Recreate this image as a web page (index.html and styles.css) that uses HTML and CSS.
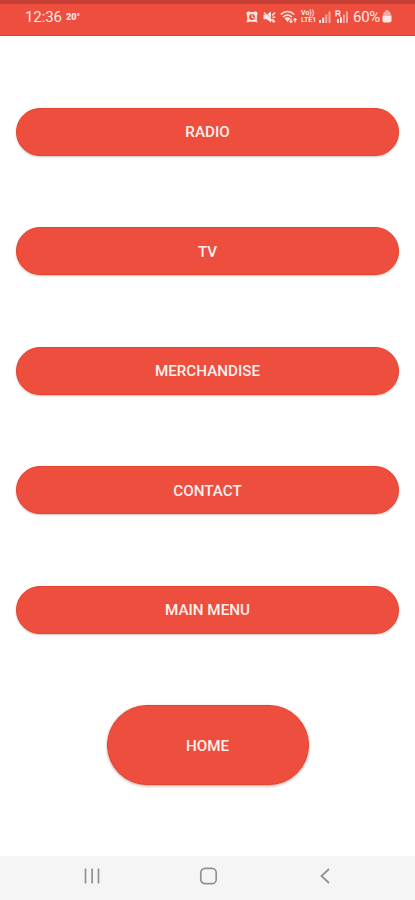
FILE: index.html
```html
<!DOCTYPE html>
<html lang="en">
<head>
<meta charset="utf-8">
<meta name="viewport" content="width=device-width, initial-scale=1">
<title>Menu</title>
<link rel="stylesheet" href="styles.css">
</head>
<body>
<div class="screen">
  <header class="status">
    <span class="clock">12:36</span>
    <span class="temp">20°</span>
    <div class="indicators">
      <svg class="alarm" width="12" height="12" viewBox="0 0 12 12" fill="currentColor"><path fill-rule="evenodd" d="M.6 1.200 3 .3 4 1h4l1-.7 2.400.9v2.500l-.5.700v5l.8 1.800H9.800L9 10.800H3l-.8.400H.3l.8-1.800v-5L.6 3.700ZM6 3.100a2.900 2.900 0 1 0 0 5.800 2.900 2.900 0 0 0 0-5.800Z"/><path d="M5.500 3.800h1.100v1.900l1.300.9-.6.800-1.800-1.100Z"/></svg>
      <svg class="mute" width="13" height="12" viewBox="0 0 13 12"><path fill="currentColor" d="M.5 3.800h3.300l4.200-3.300v11L3.800 8.200H.5Z"/><path fill="none" stroke="currentColor" stroke-width="1.500" d="M9.200 4.500 12 1.500M9.500 6.200h2.800M9.300 8l2.700 2.700"/><path fill="none" stroke="#ed4e3e" stroke-width=".7" d="M2.200 1.200 10 10"/><path fill="none" stroke="currentColor" stroke-width="1.200" d="M1 1.500 11 11.500"/></svg>
      <svg class="wifi" width="18" height="14" viewBox="0 0 18 14" fill="none" stroke="currentColor"><path stroke-width="1.600" d="M.8 4.500C4.800.5 10.200.5 14.200 4.500M3 7c3-2.700 6-2.700 9 0"/><path fill="currentColor" stroke="none" d="M4.500 8.300q3-2.200 6 0L7.500 12Z"/><path stroke-width="1.200" d="M11 8.500v4M9.500 11l1.500 1.500 1.500-1.500M15 12.500v-4M13.500 10 15 8.500l1.500 1.500"/></svg>
      <span class="volte"><span>Vo))</span><span>LTE1</span></span>
      <svg class="signal" width="12" height="12" viewBox="0 0 12 12" fill="currentColor"><path d="M0 9h2v3H0ZM3.200 6.500h2V12h-2Z"/><path d="M6.300 3.500h2V12h-2ZM9.500.5h2V12h-2Z" opacity=".6"/></svg>
      <svg class="roaming" width="14" height="13" viewBox="0 0 14 13"><path fill="none" stroke="currentColor" stroke-width="1.400" d="M1 6.500V1h2.400q1.600 0 1.600 1.400T3.400 3.800H1m2.400 0L5.200 6.500"/><g fill="currentColor"><path d="M2 9h1.900v4H2ZM5 7.200h1.900V13H5Z"/><path d="M8 4.500h1.900V13H8ZM11 1.500h1.900V13H11Z" opacity=".6"/></g></svg>
      <span class="percent">60%</span>
      <svg class="battery" width="10" height="13" viewBox="0 0 10 13" fill="currentColor"><path d="M3.500 0h3v1.500q2.500 0 2.500 4H1q0-4 2.500-4Z" opacity=".6"/><path d="M.5 5.500h9v5q0 2-2 2h-5q-2 0-2-2Z"/></svg>
    </div>
  </header>
  <main class="menu">
    <button class="button">RADIO</button>
    <button class="button">TV</button>
    <button class="button">MERCHANDISE</button>
    <button class="button">CONTACT</button>
    <button class="button">MAIN MENU</button>
    <button class="button home">HOME</button>
  </main>
  <nav class="navbar">
    <svg width="18" height="18" viewBox="0 0 18 18" fill="none" stroke="#929292" stroke-width="1.700"><path d="M2.500 1.500v15M9.100 1.500v15M15.500 1.500v15"/></svg>
    <svg width="20" height="20" viewBox="0 0 20 20" fill="none" stroke="#929292" stroke-width="1.700"><rect x="1.800" y="2.300" width="15.400" height="15.400" rx="4.300"/></svg>
    <svg width="18" height="18" viewBox="0 0 18 18" fill="none" stroke="#929292" stroke-width="1.800"><path d="m13 2-7.500 7 7.500 7"/></svg>
  </nav>
</div>
</body>
</html>
```
FILE: styles.css
```css
* { box-sizing: border-box; }

body {
  margin: 0;
  background: #fff;
  font-family: Roboto, sans-serif;
}

.screen {
  display: flex;
  flex-direction: column;
  height: 900px;
}

.status {
  display: flex;
  align-items: center;
  flex: none;
  height: 36px;
  padding: 0 23px 6px 25px;
  border-top: 4px solid #c63f34;
  border-bottom: 1px solid #e63e29;
  background: #ed4e3e;
  color: #ffe6e2;
}

.clock {
  width: 37px;
  font-size: 15px;
  line-height: 18px;
  letter-spacing: -0.1px;
}

.temp {
  margin-left: 4px;
  font-size: 9px;
  font-weight: 900;
}

.indicators {
  display: flex;
  align-items: center;
  margin-left: auto;
}

.indicators svg { flex: none; }

.mute { margin-left: 5px; }
.wifi { margin-left: 4px; }

.volte {
  display: flex;
  flex-direction: column;
  width: 16px;
  margin-left: 3px;
  font-size: 7px;
  font-weight: 700;
  line-height: 7px;
}

.signal { margin-left: 2px; }
.roaming { margin-left: 4px; }

.percent {
  width: 28px;
  margin-left: 4px;
  font-size: 15px;
  line-height: 18px;
  letter-spacing: -0.3px;
}

.battery { margin-left: 1px; }

.menu {
  display: flex;
  flex: 1;
  flex-direction: column;
  align-items: center;
  gap: 71.500px;
  padding: 71.500px 16px 0 16px;
}

.button {
  flex: none;
  width: 100%;
  height: 48px;
  padding: 1px 0 0;
  border: 1px solid #e7432e;
  border-radius: 24px;
  background: #ed4e3d;
  box-shadow: 0 1px 2px rgba(90, 30, 20, 0.28);
  color: #fff0ed;
  font: 500 15.200px/20px Roboto, sans-serif;
}

.home {
  width: 202px;
  height: 80px;
  padding-top: 2px;
  border-radius: 40px;
  box-shadow: 0 1px 3px rgba(90, 30, 20, 0.4);
}

.navbar {
  display: flex;
  align-items: center;
  justify-content: space-between;
  flex: none;
  height: 44px;
  padding: 0 81px 4px 83px;
  background: #f5f5f5;
}
```
